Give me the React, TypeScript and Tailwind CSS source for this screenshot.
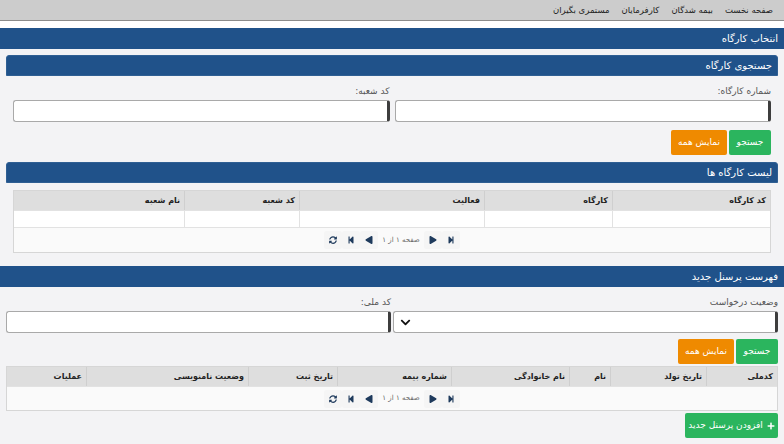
import { FaChevronDown, FaPlay, FaPlus, FaStepBackward, FaStepForward, FaSyncAlt } from "react-icons/fa";

const navItems = ["صفحه نخست", "بیمه شدگان", "کارفرمایان", "مستمری بگیران"];

const workshopCols = [
  { title: "کد کارگاه", w: "w-[158px]" },
  { title: "کارگاه", w: "w-[128px]" },
  { title: "فعالیت", w: "w-[185px]" },
  { title: "کد شعبه", w: "w-[115px]" },
  { title: "نام شعبه", w: "flex-1" },
];

const staffCols = [
  { title: "کدملی", w: "w-[71px]" },
  { title: "تاریخ تولد", w: "w-[96px]" },
  { title: "نام", w: "w-[41px]" },
  { title: "نام خانوادگی", w: "w-[118px]" },
  { title: "شماره بیمه", w: "w-[114px]" },
  { title: "تاریخ ثبت", w: "w-[89px]" },
  { title: "وضعیت نامنویسی", w: "w-[162px]" },
  { title: "عملیات", w: "flex-1" },
];

function Bar({ title, inset }: { title: string; inset?: boolean }) {
  return (
    <div
      className={
        inset
          ? "flex h-[21px] items-center rounded-t-[3px] border border-[#2f5f93] bg-[#20528a] pr-[5px] text-[10px] text-white"
          : "flex h-[21px] items-center bg-[#20528a] pr-[6px] text-[10px] text-white"
      }
    >
      {title}
    </div>
  );
}

function Field({ label, select }: { label: string; select?: boolean }) {
  return (
    <div className="flex flex-col">
      <label className="mb-[2px] h-[14px] text-[9px] leading-[14px] text-[#555]">{label}</label>
      <div className="flex h-[22px] items-center justify-end rounded-[3px] border border-[#a9a9a9] border-r-[3px] border-r-[#3d3d3d] bg-white pl-[6px]">
        {select && <FaChevronDown className="text-[11px] text-[#111]" />}
      </div>
    </div>
  );
}

function Buttons() {
  return (
    <div className="flex gap-[2px]">
      <button className="h-[25px] w-[42px] rounded-[2px] bg-[#2bb55e] text-[9px] text-white">جستجو</button>
      <button className="h-[25px] w-[56px] rounded-[2px] bg-[#ef8a00] text-[9px] text-white">نمایش همه</button>
    </div>
  );
}

function PagerBtn({ children }: { children: React.ReactNode }) {
  return (
    <span className="flex h-[18px] w-[18px] items-center justify-center rounded-[2px] bg-[#f5f5f5] text-[#1e3a5c]">
      {children}
    </span>
  );
}

function Pager({ h }: { h: string }) {
  return (
    <div className={`flex ${h} items-center justify-center bg-[#fafafa]`}>
      <PagerBtn><FaStepForward className="text-[8px]" /></PagerBtn>
      <PagerBtn><FaPlay className="text-[8px]" /></PagerBtn>
      <span className="px-[4px] text-[7px] text-[#666]">صفحه ۱ از ۱</span>
      <PagerBtn><FaPlay className="rotate-180 text-[8px]" /></PagerBtn>
      <PagerBtn><FaStepBackward className="text-[8px]" /></PagerBtn>
      <PagerBtn><FaSyncAlt className="text-[8px]" /></PagerBtn>
    </div>
  );
}

function HeaderRow({ cols }: { cols: { title: string; w: string }[] }) {
  return (
    <div className="flex h-[19px] bg-[#dedede]">
      {cols.map((c, i) => (
        <div
          key={c.title}
          className={`${c.w} flex items-center pr-[4px] text-[8px] font-bold text-[#222] ${i < cols.length - 1 ? "border-l border-[#cfcfcf]" : ""}`}
        >
          {c.title}
        </div>
      ))}
    </div>
  );
}

export default function App() {
  return (
    <div dir="rtl" className="h-[444px] w-[784px] overflow-hidden bg-[#f3f3f5] font-['DejaVu_Sans',sans-serif]">
      {/* top nav */}
      <div className="flex h-[21px] items-center gap-[12px] border-b border-[#8c8c8c] bg-[#cccccc] pr-[11px] text-[8.5px] text-[#222]">
        {navItems.map((n) => (
          <span key={n} className="whitespace-nowrap">{n}</span>
        ))}
      </div>
      <div className="h-[7px] bg-white" />

      {/* workshop selection */}
      <Bar title="انتخاب کارگاه" />
      <div className="px-[6px] pt-[6px]">
        <Bar title="جستجوی کارگاه" inset />
        <div className="px-[7px] pb-[7px] pt-[8px]">
          <div className="grid grid-cols-2 gap-[5px]">
            <Field label="شماره کارگاه:" />
            <Field label="کد شعبه:" />
          </div>
          <div className="mt-[8px]">
            <Buttons />
          </div>
        </div>

        <Bar title="لیست کارگاه ها" inset />
        <div className="px-[7px] pb-[8px] pt-[7px]">
          <div className="border border-[#d6d6d6] bg-white">
            <HeaderRow cols={workshopCols} />
            <div className="flex h-[18px] border-b border-t border-[#e2e2e2] bg-white">
              {workshopCols.map((c, i) => (
                <div key={c.title} className={`${c.w} ${i < workshopCols.length - 1 ? "border-l border-[#e2e2e2]" : ""}`} />
              ))}
            </div>
            <Pager h="h-[24px]" />
          </div>
        </div>
      </div>

      {/* new staff */}
      <div className="mt-[5px]">
        <Bar title="فهرست پرسنل جدید" />
      </div>
      <div className="px-[6px] pt-[8px]">
        <div className="grid grid-cols-2 gap-[2px]">
          <Field label="وضعیت درخواست" select />
          <Field label="کد ملی:" />
        </div>
        <div className="mt-[6px]">
          <Buttons />
        </div>
        <div className="mt-[2px] border border-[#d6d6d6] bg-white">
          <HeaderRow cols={staffCols} />
          <div className="border-t border-[#e2e2e2]">
            <Pager h="h-[23px]" />
          </div>
        </div>
        <button className="mt-[2px] flex h-[25px] w-[93px] items-center justify-center gap-[4px] rounded-[2px] bg-[#2bb55e] text-[9px] text-white">
          <FaPlus className="text-[8px]" />
          افزودن پرسنل جدید
        </button>
      </div>
    </div>
  );
}
